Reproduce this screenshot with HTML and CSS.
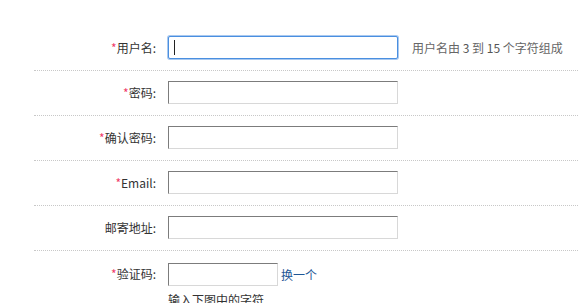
FILE: index.html
```html
<!DOCTYPE html>
<html lang="zh-CN">
<head>
<meta charset="utf-8">
<title>注册</title>
<link rel="stylesheet" href="styles.css">
</head>
<body>
<form class="reg-form">
  <div class="row">
    <label class="label"><span class="req">*</span>用户名:</label>
    <span class="field-wrap">
      <input class="text-input focused" type="text">
      <span class="caret"></span>
    </span>
    <span class="hint">用户名由 <span class="num">3</span> 到 <span class="num">15</span> 个字符组成</span>
  </div>
  <div class="row">
    <label class="label"><span class="req">*</span>密码:</label>
    <input class="text-input" type="password">
  </div>
  <div class="row">
    <label class="label"><span class="req">*</span>确认密码:</label>
    <input class="text-input" type="password">
  </div>
  <div class="row">
    <label class="label"><span class="req">*</span>Email:</label>
    <input class="text-input" type="text">
  </div>
  <div class="row">
    <label class="label">邮寄地址:</label>
    <input class="text-input" type="text">
  </div>
  <div class="row row-captcha">
    <label class="label"><span class="req">*</span>验证码:</label>
    <div class="captcha">
      <div class="captcha-line">
        <input class="text-input short" type="text">
        <a class="change" href="#">换一个</a>
      </div>
      <div class="captcha-tip">输入下图中的字符</div>
    </div>
  </div>
</form>
</body>
</html>
```

FILE: styles.css
```css
html, body {
  margin: 0;
  padding: 0;
  background: #fff;
  overflow: hidden;
}
body {
  font-family: "Noto Sans CJK SC", "Microsoft YaHei", "Liberation Sans", sans-serif;
  font-size: 12px;
  color: #333;
}
.reg-form {
  margin: 0 0 0 34px;
  padding-top: 26px;
}
.row {
  display: flex;
  align-items: center;
  padding: 10px 0 11px;
  border-bottom: 1px dotted #c8c8c8;
}
.label {
  width: 122px;
  margin-right: 12px;
  text-align: right;
  line-height: 18px;
  color: #333;
}
.req {
  color: #f03c6a;
}
.field-wrap {
  position: relative;
  display: inline-block;
  height: 23px;
}
.text-input {
  box-sizing: border-box;
  width: 230px;
  height: 23px;
  margin: 0;
  padding: 0 4px;
  border: 1px solid;
  border-color: #7c7c7c #d8d8d8 #d8d8d8 #7c7c7c;
  background: #fff;
  font-family: inherit;
  font-size: 12px;
  outline: none;
  display: block;
}
.text-input.focused {
  border: 1px solid #4a8fe0;
  border-radius: 2px;
  box-shadow: 0 0 0 1px #a9c9f0;
}
.caret {
  position: absolute;
  left: 6px;
  top: 4px;
  width: 1px;
  height: 15px;
  background: #222;
}
.hint {
  margin-left: 14px;
  color: #666;
  line-height: 18px;
}
.num {
  color: #555;
}
.row-captcha {
  align-items: flex-start;
  padding-top: 12px;
  border-bottom: none;
}
.row-captcha .label {
  margin-top: 2px;
}
.captcha {
  display: flex;
  flex-direction: column;
}
.captcha-line {
  display: flex;
  align-items: center;
}
.text-input.short {
  width: 110px;
}
.change {
  margin-left: 3px;
  color: #1f5796;
  text-decoration: none;
  line-height: 18px;
}
.captcha-tip {
  margin-top: 5px;
  line-height: 18px;
  color: #333;
}
```
